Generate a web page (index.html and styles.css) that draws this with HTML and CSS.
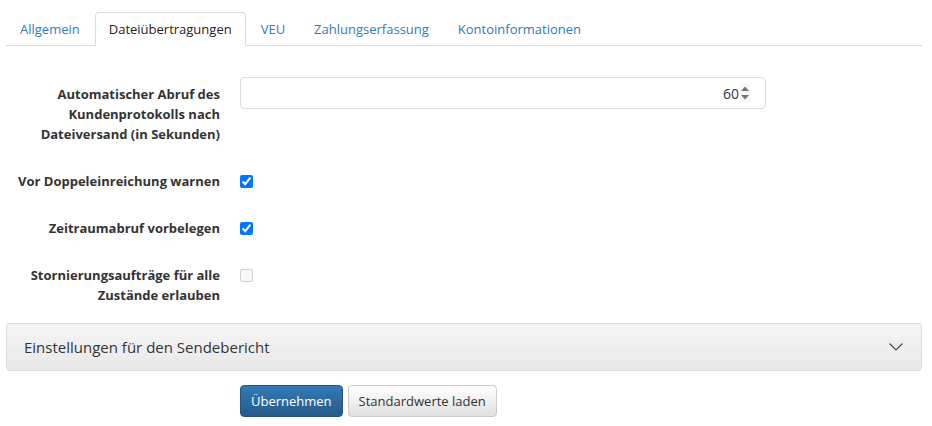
FILE: index.html
```html
<!DOCTYPE html>
<html lang="de">

<head>
    <meta charset="utf-8">
    <title>Einstellungen - Dateiübertragungen</title>
    <link rel="stylesheet" href="styles.css">
</head>

<body>
    <div class="page">
        <ul class="tabs">
            <li><a href="#">Allgemein</a></li>
            <li class="active"><a href="#">Dateiübertragungen</a></li>
            <li><a href="#">VEU</a></li>
            <li><a href="#">Zahlungserfassung</a></li>
            <li><a href="#">Kontoinformationen</a></li>
        </ul>

        <form class="settings">
            <div class="form-group first">
                <label class="control-label" for="abruf">Automatischer Abruf des<br>Kundenprotokolls nach<br>Dateiversand (in Sekunden)</label>
                <div class="number-field">
                    <input id="abruf" type="text" value="60" />
                    <svg class="spinner" width="10" height="18" viewBox="0 0 10 18">
                        <path d="M1 7 L5 2.5 L9 7 Z" fill="#757575" />
                        <path d="M1 11 L5 15.5 L9 11 Z" fill="#757575" />
                    </svg>
                </div>
            </div>

            <div class="form-group check-row">
                <label class="control-label" for="doppel">Vor Doppeleinreichung warnen</label>
                <div><input id="doppel" type="checkbox" checked /></div>
            </div>

            <div class="form-group check-row">
                <label class="control-label" for="zeitraum">Zeitraumabruf vorbelegen</label>
                <div><input id="zeitraum" type="checkbox" checked /></div>
            </div>

            <div class="form-group check-row last">
                <label class="control-label" for="storno">Stornierungsaufträge für alle<br>Zustände erlauben</label>
                <div><input id="storno" type="checkbox" disabled /></div>
            </div>

            <div class="panel">
                <span>Einstellungen für den Sendebericht</span>
                <svg width="14" height="8" viewBox="0 0 14 8">
                    <polyline points="0.5,0.5 7,7 13.5,0.5" fill="none" stroke="#444" stroke-width="1.1" />
                </svg>
            </div>

            <div class="actions">
                <button type="button" class="btn btn-primary">Übernehmen</button>
                <button type="button" class="btn btn-default">Standardwerte laden</button>
            </div>
        </form>
    </div>
</body>

</html>
```

FILE: styles.css
```css
html,
body {
    padding: 0;
    margin: 0;
}

* {
    box-sizing: border-box;
}

body {
    font-family: "Segoe UI", "Open Sans", sans-serif;
    font-size: 13px;
    line-height: 20px;
    color: #333;
    background-color: #fff;
}

.page {
    padding: 12px 10px 0 6px;
}

.tabs {
    display: flex;
    list-style: none;
    margin: 0;
    padding: 0;
    border-bottom: 1px solid #dddddd;
}

.tabs li {
    margin-right: 1px;
    margin-bottom: -1px;
}

.tabs a {
    display: block;
    padding: 6px 13px;
    border: 1px solid transparent;
    border-radius: 4px 4px 0 0;
    color: #337ab7;
    text-decoration: none;
}

.tabs .active a {
    color: #222;
    background-color: #fff;
    border-color: #dddddd #dddddd #fff;
}

.settings {
    margin-top: 31px;
}

.form-group {
    display: grid;
    grid-template-columns: 214px 526px;
    column-gap: 20px;
    margin-bottom: 25px;
}

.control-label {
    text-align: right;
    font-weight: bold;
    color: #333;
}

.first .control-label {
    padding-top: 7px;
}

.form-group.first {
    margin-bottom: 27px;
}

.form-group.last {
    margin-bottom: 18px;
}

.number-field {
    display: flex;
    align-items: center;
    height: 32px;
    padding: 0 15px 0 12px;
    border: 1px solid #dddddd;
    border-radius: 4px;
}

.number-field input {
    flex: 1;
    min-width: 0;
    border: 0;
    outline: 0;
    padding: 0;
    text-align: right;
    font-family: inherit;
    font-size: 14px;
    color: #333;
}

.number-field .spinner {
    margin-left: 1px;
    background-color: #f7f7f7;
}

.check-row input {
    width: 13px;
    height: 13px;
    margin: 4px 0 0 0;
    accent-color: #0075ff;
}

.panel {
    display: flex;
    align-items: center;
    justify-content: space-between;
    height: 48px;
    padding: 0 18px 0 17px;
    border: 1px solid #dddddd;
    border-radius: 4px;
    background-image: linear-gradient(to bottom, #f5f5f5 0%, #e8e8e8 100%);
    font-size: 15px;
    color: #333;
}

.actions {
    display: flex;
    gap: 5px;
    margin-top: 14px;
    padding-left: 234px;
}

.btn {
    height: 32px;
    padding: 0 10px;
    border: 1px solid #ccc;
    border-radius: 4px;
    font-family: inherit;
    font-size: 13px;
    cursor: pointer;
}

.btn-primary {
    color: #fff;
    border-color: #245580;
    background-image: linear-gradient(to bottom, #337ab7 0%, #265a88 100%);
}

.btn-default {
    color: #333;
    background-image: linear-gradient(to bottom, #fff 0%, #e0e0e0 100%);
}
```
